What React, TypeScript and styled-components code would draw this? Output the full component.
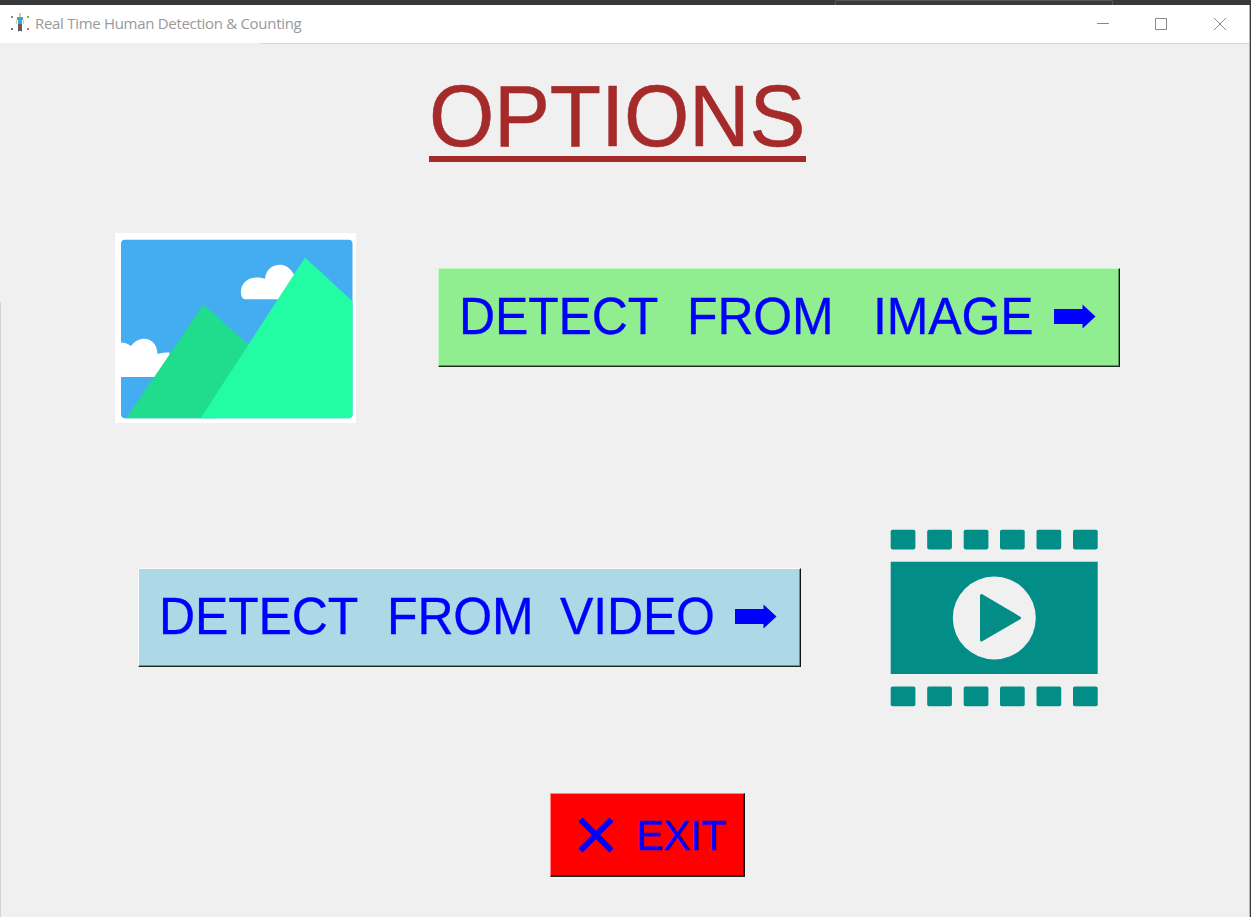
import React from 'react';
import styled, { createGlobalStyle } from 'styled-components';

const GlobalStyle = createGlobalStyle`
  * { box-sizing: border-box; }
  body { margin: 0; background: #f0f0f0; overflow: hidden; }
`;

const Desktop = styled.div`
  width: 1251px;
  height: 917px;
  padding-right: 1px;
  background: #38393b;
  overflow: hidden;
`;

const BackgroundStrip = styled.div`
  height: 5px;
  padding-left: 835px;
`;

const BackgroundTab = styled.div`
  width: 278px;
  height: 5px;
  border: 1px solid #59595b;
  border-bottom: 0;
  border-radius: 2px 2px 0 0;
`;

const Window = styled.div`
  height: 912px;
  display: flex;
  flex-direction: column;
  background: linear-gradient(#d4d4d4, #d4d4d4) 0 297px / 1px 615px no-repeat #f0f0f0;
  border-right: 1px solid #b4b6b8;
`;

const TitleBar = styled.header`
  height: 38px;
  flex: none;
  display: flex;
  align-items: center;
  padding-left: 10px;
  background: #fff;
`;

const Caption = styled.span`
  flex: 1;
  margin: 0 0 2px 5px;
  font: 15px/20px 'Open Sans', sans-serif;
  letter-spacing: -0.3px;
  color: #999;
  white-space: pre;
`;

const Controls = styled.div`
  display: flex;
  gap: 46px;
  margin-right: 23px;
`;

const Rule = styled.div`
  height: 1px;
  flex: none;
  margin-left: 260px;
  background: #d6d8d7;
`;

const Content = styled.main`
  flex: 1;
  display: flex;
  flex-direction: column;
`;

const Heading = styled.h1`
  align-self: flex-start;
  width: 377px;
  height: 88px;
  margin: 30px 0 0 429px;
  border-bottom: 6px solid #a52a2a;
  font: 400 84px/84px 'Liberation Sans', Arial, sans-serif;
  letter-spacing: -0.25px;
  -webkit-text-stroke: 0.5px #a52a2a;
  color: #a52a2a;
  white-space: nowrap;
`;

const HeadingText = styled.span`
  display: block;
  transform: scaleY(1.04);
`;

const Row = styled.section<{ $top: number; $left: number; $gap?: number }>`
  display: flex;
  align-items: flex-start;
  gap: ${(p) => p.$gap ?? 0}px;
  margin-top: ${(p) => p.$top}px;
  padding-left: ${(p) => p.$left}px;
`;

const Button = styled.button<{
  $width: number;
  $height: number;
  $bg: string;
  $light: string;
  $dark: string;
  $size: number;
  $spacing: number;
  $pad: number;
  $lift?: number;
  $drop?: number;
}>`
  display: flex;
  align-items: center;
  flex: none;
  width: ${(p) => p.$width}px;
  height: ${(p) => p.$height}px;
  margin-top: ${(p) => p.$drop ?? 0}px;
  padding: 0 0 ${(p) => p.$lift ?? 0}px ${(p) => p.$pad}px;
  background: ${(p) => p.$bg};
  border: 1px solid;
  border-color: ${(p) => `${p.$light} #101410 #202820 ${p.$light}`};
  border-radius: 0;
  box-shadow: inset -1px -1px 0 ${(p) => p.$dark};
  font: ${(p) => p.$size}px/58px 'Liberation Sans', Arial, sans-serif;
  letter-spacing: ${(p) => p.$spacing}px;
  -webkit-text-stroke: 0.3px #00f;
  color: #00f;
  white-space: pre;
`;

const Word = styled.span<{ $width: number }>`
  width: ${(p) => p.$width}px;
  flex: none;
  text-align: left;
  transform: scaleY(1.04);
`;

const Drawing = styled.svg`
  display: block;
  flex: none;
`;

const CrossSlot = styled.span`
  width: 58px;
  flex: none;
`;

const AppIcon = () => (
  <Drawing width="20" height="22" viewBox="0 0 20 22">
    <path d="M1 3h2v2H1z" fill="#5b9fb8" />
    <path d="M17 3h2v2h-2z" fill="#7fb069" />
    <path d="M1 15h2v2H1z" fill="#77708a" />
    <path d="M17 15h2v2h-2z" fill="#dc6258" />
    <path d="M9 0h2v4H9zM6 7h1v4H6zM13 7h1v4h-1zM8 17h1v2H8zM11 17h1v2h-1z" fill="#ecc878" />
    <path d="M7 4h6v3h-1v4H8V7H7z" fill="#35a7e8" />
    <path d="M8 11h4v7H8z" fill="#625c60" />
  </Drawing>
);

const Arrow = () => (
  <Drawing width="42" height="26" viewBox="0 0 42 26">
    <path d="M0 6h28.500V1.500L41.500 13.500 28.500 25.500V21H0z" fill="#00f" />
  </Drawing>
);

const Landscape = () => (
  <Drawing width="241" height="190" viewBox="0 0 241 190">
    <defs>
      <clipPath id="frame"><rect x="6" y="6.700" width="231.500" height="178.500" rx="4" /></clipPath>
    </defs>
    <path fill="#fff" d="M0 0h241v190H0z" />
    <g clipPath="url(#frame)">
      <path fill="#44adf2" d="M0 0h241v190H0z" />
      <path fill="#fff" d="M130 66.300c-4-1-4-5-4-8 0-9 9-17 24-12.500 1-9 7-14 15-14 7 0 12 5 15 12v22.500z" />
      <path fill="#fff" d="M0 110c6-1 11-1 16 3 9-12 26-9 26.500 8 4-1.500 8-1.500 12-1.500v24.500H0z" />
      <path fill="#20dc8d" d="M8 190 88.500 71.500 134 112 100 190z" />
      <path fill="#22fda4" d="M82.500 190 190 24.500 241 71.500V190z" />
    </g>
  </Drawing>
);

const holes = [0, 36.5, 73, 109.3, 145.8, 182.3];

const Film = () => (
  <Drawing width="208" height="178" viewBox="0 0 208 178" fill="#028d86">
    {holes.map((x) => (
      <React.Fragment key={x}>
        <rect x={x + 0.7} y="0.7" width="24.700" height="19.700" rx="1.800" />
        <rect x={x + 0.7} y="157.500" width="24.700" height="19.700" rx="1.800" />
      </React.Fragment>
    ))}
    <path d="M.7 32.700h207v112.300H.7z" />
    <circle cx="104.300" cy="89" r="41.500" fill="#f0f0f0" />
    <path d="M91.500 66.500 129.500 89 91.500 111z" stroke="#028d86" strokeWidth="3" strokeLinejoin="round" />
  </Drawing>
);

const Cross = () => (
  <Drawing width="36" height="36" viewBox="0 0 36 36">
    <path d="M2.500 2.500l31 31M33.500 2.500l-31 31" stroke="#00f" strokeWidth="6" />
  </Drawing>
);

export default function App() {
  return (
    <>
      <GlobalStyle />
      <Desktop>
        <BackgroundStrip><BackgroundTab /></BackgroundStrip>
        <Window>
          <TitleBar>
            <AppIcon />
            <Caption>Real Time Human Detection &amp; Counting</Caption>
            <Controls>
              <Drawing width="12" height="12" stroke="#888" fill="none"><path d="M0 5.500h12" /></Drawing>
              <Drawing width="12" height="12" stroke="#888" fill="none"><path d="M.5.5h11v11H.5z" /></Drawing>
              <Drawing width="13" height="12" stroke="#888" fill="none"><path d="M1 0l12 12M13 0L1 12" /></Drawing>
            </Controls>
          </TitleBar>
          <Rule />
          <Content>
            <Heading><HeadingText>OPTIONS</HeadingText></Heading>
            <Row $top={71} $left={115} $gap={82}>
              <Landscape />
              <Button $width={682} $height={99} $drop={35} $bg="#90ee90" $light="#c4f8c4" $dark="#5c985c" $size={50} $spacing={-0.15} $pad={20} $lift={3}>
                <Word $width={228}>DETECT</Word>
                <Word $width={186}>FROM</Word>
                <Word $width={181}>IMAGE</Word>
                <Arrow />
              </Button>
            </Row>
            <Row $top={106} $left={138} $gap={89}>
              <Button $width={663} $height={99} $drop={39} $bg="#add8e6" $light="#f8fcfd" $dark="#6f8b94" $size={50} $spacing={-0.15} $pad={20} $lift={3}>
                <Word $width={228}>DETECT</Word>
                <Word $width={173}>FROM</Word>
                <Word $width={175}>VIDEO</Word>
                <Arrow />
              </Button>
              <Film />
            </Row>
            <Row $top={86} $left={550}>
              <Button $width={195} $height={84} $bg="#ff0000" $light="#ff8080" $dark="#990000" $size={41.5} $spacing={-0.6} $pad={27}>
                <CrossSlot><Cross /></CrossSlot>
                <Word $width={90}>EXIT</Word>
              </Button>
            </Row>
          </Content>
        </Window>
      </Desktop>
    </>
  );
}
